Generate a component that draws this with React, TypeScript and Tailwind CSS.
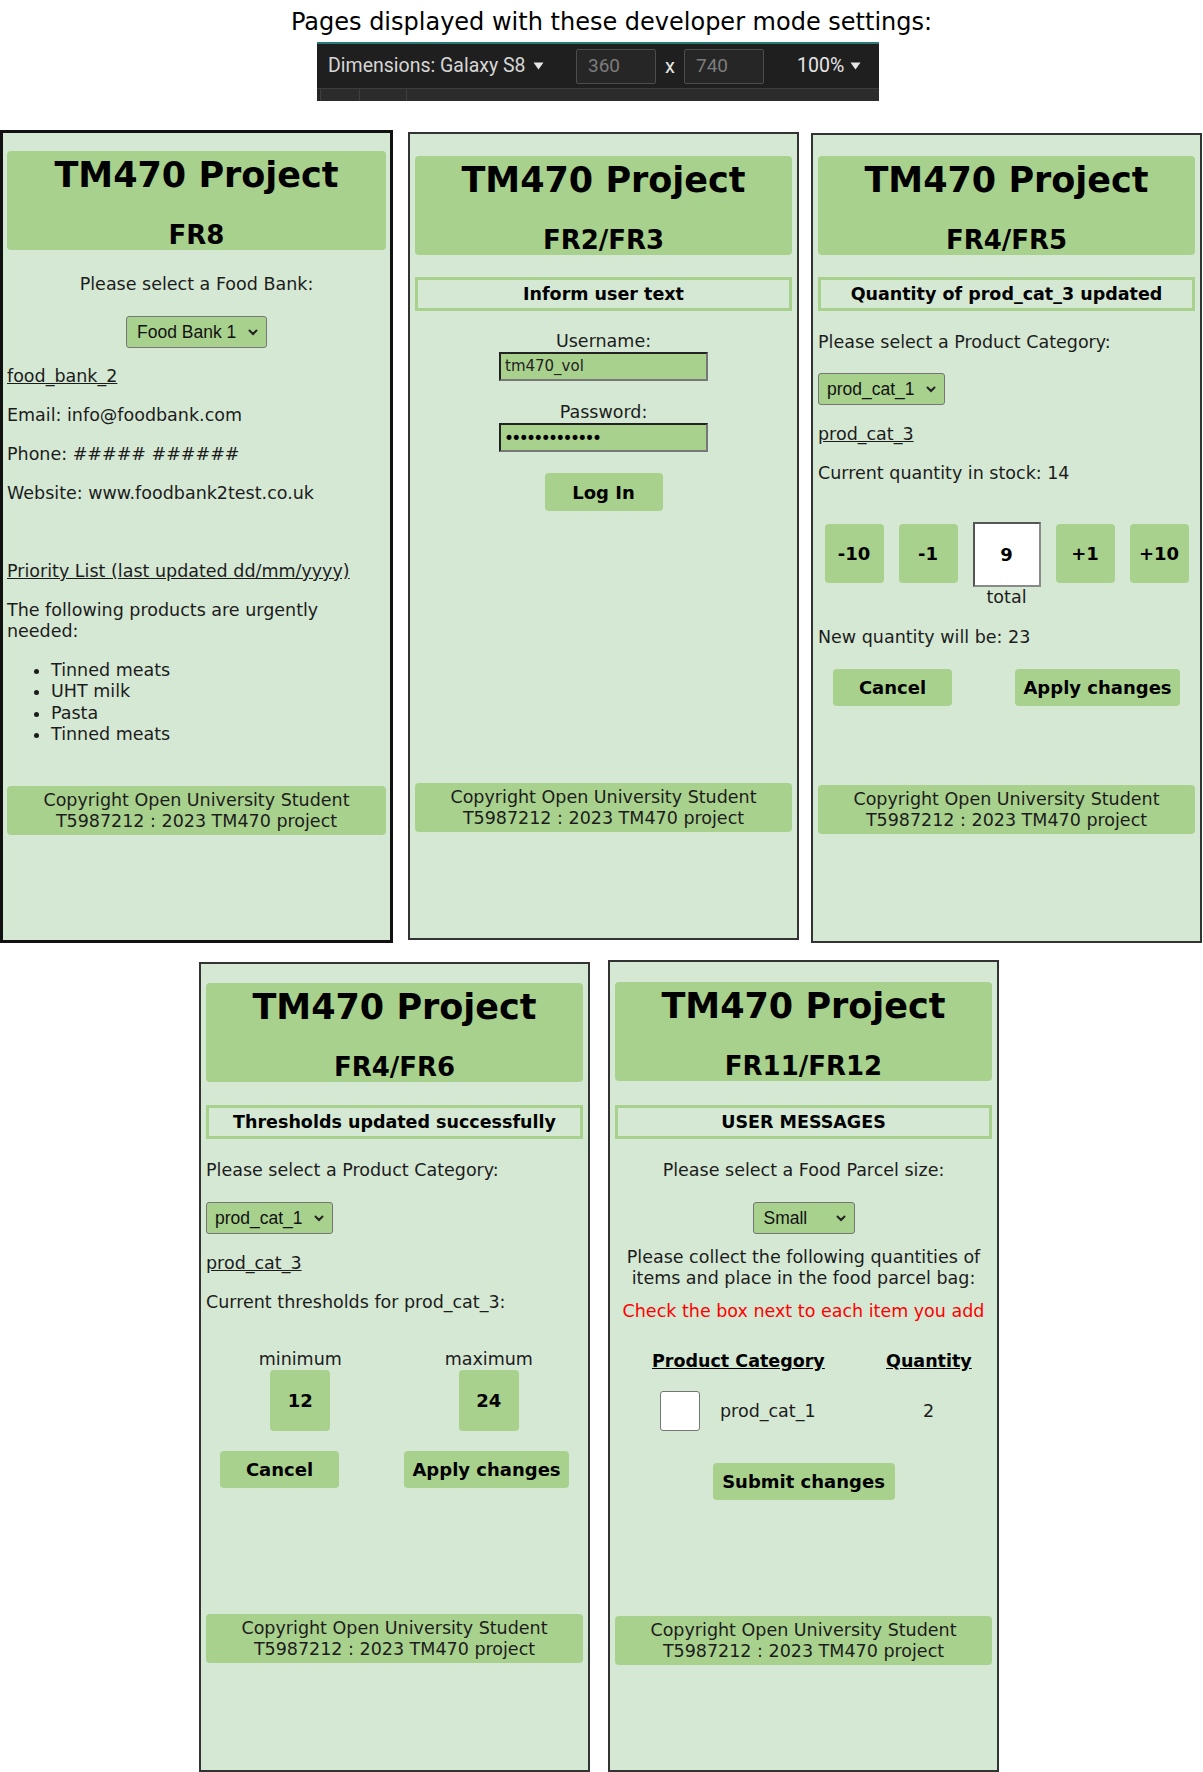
import React from "react";

const Chevron = () => (
  <svg width="10" height="7" viewBox="0 0 10 7" className="shrink-0">
    <path d="M1.5 1.5 L5 5 L8.5 1.5" stroke="#222" strokeWidth="2" fill="none" strokeLinecap="round" />
  </svg>
);

const Tri = () => (
  <svg width="11" height="8" viewBox="0 0 11 8" className="shrink-0">
    <path d="M0.5 0.5 L10.5 0.5 L5.5 7.5 Z" fill="#e6e6e6" />
  </svg>
);

function Header({ fr }: { fr: string }) {
  return (
    <div className="h-[99px] shrink-0 rounded-[4px] bg-[#a9d18e] pt-[4px] text-center font-bold text-black">
      <div className="text-[35px] leading-[40px]">TM470 Project</div>
      <div className="mt-[25px] text-[26px] leading-[30px]">{fr}</div>
    </div>
  );
}

function Footer() {
  return (
    <div className="h-[49px] shrink-0 rounded-[4px] bg-[#a9d18e] pt-[4px] text-center text-[17.5px] leading-[21px]">
      Copyright Open University Student
      <br />
      T5987212 : 2023 TM470 project
    </div>
  );
}

function Msg({ children, className = "" }: { children: React.ReactNode; className?: string }) {
  return (
    <div className={"h-[34px] border-[3px] border-[#a9d18e] text-center text-[17.5px] font-bold leading-[28px] text-black " + className}>
      {children}
    </div>
  );
}

function Btn({ children, className = "" }: { children: React.ReactNode; className?: string }) {
  return (
    <div className={"flex items-center justify-center rounded-[4px] bg-[#a9d18e] text-[18px] font-bold text-black " + className}>
      {children}
    </div>
  );
}

function Sel({ label, className = "" }: { label: string; className?: string }) {
  return (
    <div
      className={
        "flex h-[32px] items-center justify-between rounded-[3px] border border-[#767676] bg-[#a9d18e] pr-[8px] font-['Liberation_Sans',Arial,sans-serif] text-[17.5px] text-[#111] " +
        className
      }
    >
      <span>{label}</span>
      <Chevron />
    </div>
  );
}

const Line = ({ children, className = "" }: { children: React.ReactNode; className?: string }) => (
  <div className={"text-[17.5px] leading-[21px] " + className}>{children}</div>
);

function Panel1() {
  return (
    <div className="flex h-[813px] w-[393px] shrink-0 flex-col border-[3px] border-[#111] bg-[#d5e8d4] px-[4px] pt-[18px]">
      <Header fr="FR8" />
      <div className="flex h-[536px] shrink-0 flex-col">
        <Line className="mt-[24px] text-center">Please select a Food Bank:</Line>
        <div className="mt-[21px] flex justify-center">
          <Sel label="Food Bank 1" className="w-[141px] pl-[10px]" />
        </div>
        <div className="mt-[18px] flex flex-col gap-[18px]">
          <Line className="underline">food_bank_2</Line>
          <Line>Email: info@foodbank.com</Line>
          <Line>Phone: ##### ######</Line>
          <Line>Website: www.foodbank2test.co.uk</Line>
          <div className="h-[21px]" />
          <Line className="underline">Priority List (last updated dd/mm/yyyy)</Line>
          <Line>
            The following products are urgently
            <br />
            needed:
          </Line>
          <ul className="list-disc pl-[44px] text-[17.5px] leading-[21.3px]">
            <li>Tinned meats</li>
            <li>UHT milk</li>
            <li>Pasta</li>
            <li>Tinned meats</li>
          </ul>
        </div>
      </div>
      <Footer />
    </div>
  );
}

function Panel2() {
  return (
    <div className="ml-[15px] mt-[2px] flex h-[808px] w-[391px] shrink-0 flex-col border-2 border-[#333] bg-[#d5e8d4] px-[5px] pt-[22px]">
      <Header fr="FR2/FR3" />
      <div className="flex h-[528px] shrink-0 flex-col items-center">
        <Msg className="mt-[22px] w-full">Inform user text</Msg>
        <Line className="mt-[20px] text-center">Username:</Line>
        <div className="flex h-[29px] w-[209px] items-center border-2 border-b-[#777] border-l-[#222] border-r-[#777] border-t-[#222] bg-[#a9d18e] pl-[4px] text-[15px] text-[#222]">
          tm470_vol
        </div>
        <Line className="mt-[21px] text-center">Password:</Line>
        <div className="flex h-[29px] w-[209px] items-center overflow-hidden border-2 border-b-[#777] border-l-[#222] border-r-[#777] border-t-[#222] bg-[#a9d18e] pl-[3px] text-[17px] leading-[20px] tracking-[-2.7px] text-black">
          •••••••••••••
        </div>
        <Btn className="mt-[21px] h-[38px] w-[118px]">Log In</Btn>
      </div>
      <Footer />
    </div>
  );
}

function Panel3() {
  return (
    <div className="ml-[12px] mt-[3px] flex h-[810px] w-[391px] shrink-0 flex-col border-2 border-[#333] bg-[#d5e8d4] px-[5px] pt-[21px]">
      <Header fr="FR4/FR5" />
      <div className="flex h-[530px] shrink-0 flex-col">
        <Msg className="mt-[22px]">Quantity of prod_cat_3 updated</Msg>
        <Line className="mt-[21px]">Please select a Product Category:</Line>
        <Sel label="prod_cat_1" className="mt-[20px] w-[127px] pl-[8px]" />
        <Line className="mt-[19px] underline">prod_cat_3</Line>
        <Line className="mt-[18px]">Current quantity in stock: 14</Line>
        <div className="mt-[38px] flex items-start justify-center gap-[15px]">
          <Btn className="mt-[2px] h-[59px] w-[59px]">-10</Btn>
          <Btn className="mt-[2px] h-[59px] w-[59px]">-1</Btn>
          <div className="flex w-[68px] flex-col items-center">
            <div className="flex h-[65px] w-[68px] items-center justify-center border-2 border-b-[#8a8a8a] border-l-[#555] border-r-[#8a8a8a] border-t-[#555] bg-white text-[18px] font-bold text-black">
              9
            </div>
            <Line>total</Line>
          </div>
          <Btn className="mt-[2px] h-[59px] w-[59px]">+1</Btn>
          <Btn className="mt-[2px] h-[59px] w-[59px]">+10</Btn>
        </div>
        <Line className="mt-[19px]">New quantity will be: 23</Line>
        <div className="mt-[21px] flex justify-between px-[15px]">
          <Btn className="h-[37px] w-[119px]">Cancel</Btn>
          <Btn className="h-[37px] w-[165px]">Apply changes</Btn>
        </div>
      </div>
      <Footer />
    </div>
  );
}

function Panel4() {
  return (
    <div className="mt-[19px] flex h-[810px] w-[391px] shrink-0 flex-col border-2 border-[#333] bg-[#d5e8d4] px-[5px] pt-[19px]">
      <Header fr="FR4/FR6" />
      <div className="flex h-[532px] shrink-0 flex-col">
        <Msg className="mt-[23px]">Thresholds updated successfully</Msg>
        <Line className="mt-[21px]">Please select a Product Category:</Line>
        <Sel label="prod_cat_1" className="mt-[21px] w-[127px] pl-[8px]" />
        <Line className="mt-[19px] underline">prod_cat_3</Line>
        <Line className="mt-[18px]">Current thresholds for prod_cat_3:</Line>
        <div className="mt-[36px] grid grid-cols-2">
          <div className="flex flex-col items-center">
            <Line>minimum</Line>
            <Btn className="h-[61px] w-[60px]">12</Btn>
          </div>
          <div className="flex flex-col items-center">
            <Line>maximum</Line>
            <Btn className="h-[61px] w-[60px]">24</Btn>
          </div>
        </div>
        <div className="mt-[20px] flex justify-between px-[14px]">
          <Btn className="h-[37px] w-[119px]">Cancel</Btn>
          <Btn className="h-[37px] w-[165px]">Apply changes</Btn>
        </div>
      </div>
      <Footer />
    </div>
  );
}

function Panel5() {
  return (
    <div className="ml-[18px] mt-[17px] flex h-[812px] w-[391px] shrink-0 flex-col border-2 border-[#333] bg-[#d5e8d4] px-[5px] pt-[20px]">
      <Header fr="FR11/FR12" />
      <div className="flex h-[535px] shrink-0 flex-col">
        <Msg className="mt-[24px]">USER MESSAGES</Msg>
        <Line className="mt-[21px] text-center">Please select a Food Parcel size:</Line>
        <div className="mt-[21px] flex justify-center">
          <Sel label="Small" className="w-[102px] pl-[10px]" />
        </div>
        <Line className="mt-[13px] text-center">
          Please collect the following quantities of
          <br />
          items and place in the food parcel bag:
        </Line>
        <Line className="mt-[12px] text-center text-[#ff0000]">Check the box next to each item you add</Line>
        <div className="mt-[29px] flex pl-[37px] text-[17.5px] font-bold leading-[21px] text-black">
          <div className="w-[234px]">
            <span className="underline">Product Category</span>
          </div>
          <div className="w-[85px] text-center underline">Quantity</div>
        </div>
        <div className="mt-[19px] flex items-center pl-[45px]">
          <div className="h-[40px] w-[40px] shrink-0 rounded-[3px] border border-[#767676] bg-white" />
          <Line className="ml-[20px] w-[166px]">prod_cat_1</Line>
          <Line className="w-[85px] text-center">2</Line>
        </div>
        <div className="mt-[32px] flex justify-center">
          <Btn className="h-[37px] w-[182px]">Submit changes</Btn>
        </div>
      </div>
      <Footer />
    </div>
  );
}

function Toolbar() {
  return (
    <div className="ml-[317px] mt-[6px] w-[562px] border-t-2 border-[#2b7b79] bg-[#1f1f1f] font-['Roboto',sans-serif]">
      <div className="flex h-[44px] items-center">
        <div className="flex w-[259px] items-center pl-[11px]">
          <span className="text-[19.5px] text-[#d6d6d6]">Dimensions: Galaxy S8</span>
          <span className="ml-[7px]">
            <Tri />
          </span>
        </div>
        <div className="flex h-[35px] w-[80px] items-center rounded-[2px] border border-[#4d4d4d] bg-[#262626] pl-[11px] text-[19px] text-[#7c7c7c]">
          360
        </div>
        <div className="flex w-[28px] justify-center text-[20px] text-[#e6e6e6]">x</div>
        <div className="flex h-[35px] w-[80px] items-center rounded-[2px] border border-[#4d4d4d] bg-[#262626] pl-[11px] text-[19px] text-[#7c7c7c]">
          740
        </div>
        <span className="ml-[33px] text-[19.5px] text-[#e6e6e6]">100%</span>
        <span className="ml-[6px]">
          <Tri />
        </span>
      </div>
      <div className="flex h-[13px] border-t border-[#3c3c3c] bg-[#262626]">
        <div className="w-[3px]" />
        <div className="w-[39px] border-l border-[#3f3f3f] bg-[#2c2c2c]" />
        <div className="w-[47px] border-l border-[#3f3f3f] bg-[#2c2c2c]" />
        <div className="flex-1 border-l border-[#3f3f3f] bg-[#2c2c2c]" />
      </div>
    </div>
  );
}

export default function App() {
  return (
    <div className="h-[1772px] w-[1203px] overflow-hidden bg-white font-['DejaVu_Sans',Verdana,sans-serif] text-[#1c1c1c]">
      <div className="pl-[20px] pt-[8px] text-center text-[24px] leading-[28px] text-black">
        Pages displayed with these developer mode settings:
      </div>
      <Toolbar />
      <div className="mt-[29px] flex items-start">
        <Panel1 />
        <Panel2 />
        <Panel3 />
      </div>
      <div className="flex items-start pl-[199px]">
        <Panel4 />
        <Panel5 />
      </div>
    </div>
  );
}
